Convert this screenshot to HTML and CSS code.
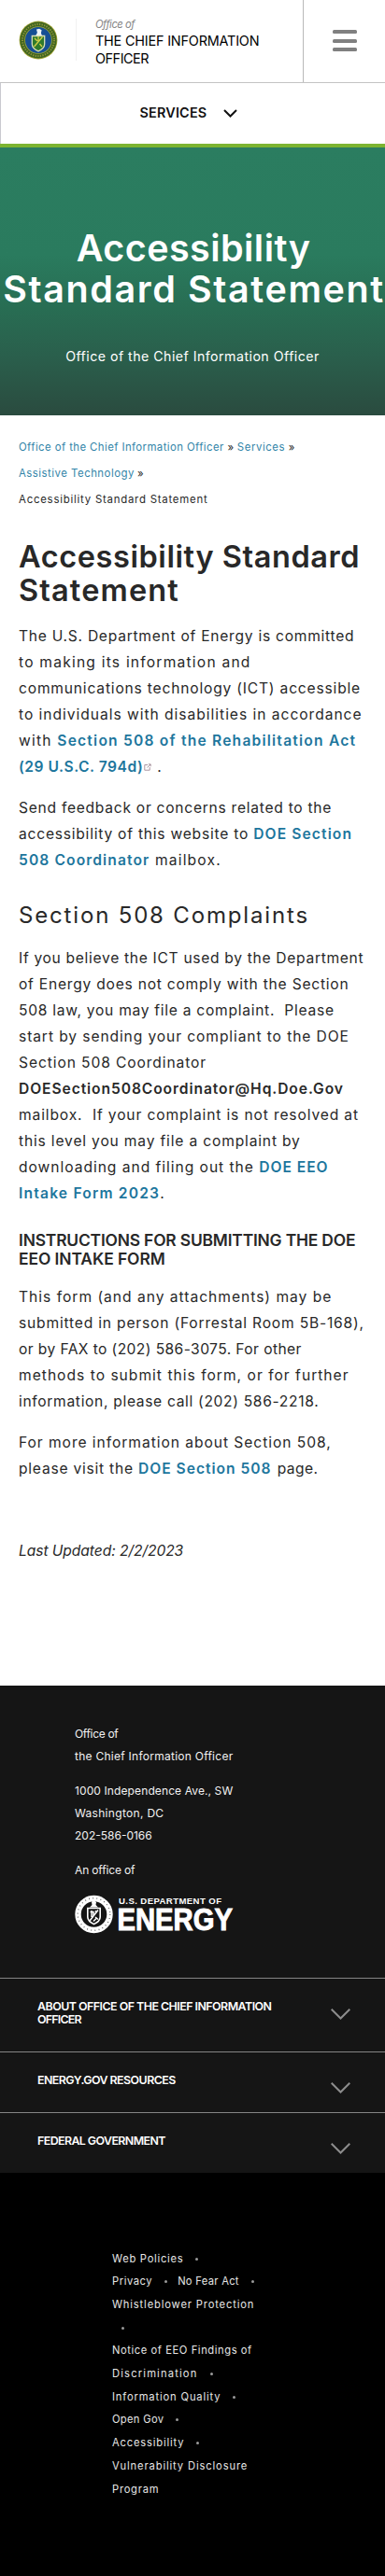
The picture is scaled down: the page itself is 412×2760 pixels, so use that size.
FILE: index.html
```html
<!DOCTYPE html>
<html lang="en">
<head>
<meta charset="utf-8">
<title>Accessibility Standard Statement | Department of Energy</title>
<link rel="stylesheet" href="styles.css">
</head>
<body>
<header class="header">
  <a class="brand">
    <svg class="seal" viewBox="0 0 42 42">
      <circle cx="21" cy="21" r="20.4" fill="#a5a636"/>
      <circle cx="21" cy="21" r="19.6" fill="#3f6420"/>
      <circle cx="21" cy="21" r="17" fill="none" stroke="#8f953a" stroke-width="2" stroke-dasharray="1.3 1.300"/>
      <circle cx="21" cy="21" r="14.800" fill="#9fa53f"/>
      <circle cx="21" cy="21" r="14" fill="#164f94"/>
      <path d="M19 9.500l3-.8 2.600 1.600-.7 3.200 1 2.400h-6.600l1.600-3z" fill="#eef3f6"/>
      <path d="M14.300 16.500h13.400v8.800c0 4-3.400 6-6.700 7.600-3.300-1.600-6.700-3.600-6.700-7.600z" fill="#2f7a2c" stroke="#d9dfb4" stroke-width="1.300"/>
      <path d="M16.500 28l9-10.500M17 19l3 3m2.500 3l2.500 3M21 17v5" stroke="#d4cf47" stroke-width="1.300" fill="none"/>
    </svg>
    <span class="brand-rule"></span>
    <span class="brand-text">
      <em class="brand-pre">Office of</em>
      <span class="ln bn1">THE CHIEF INFORMATION</span>
      <span class="ln bn2">OFFICER</span>
    </span>
  </a>
  <button class="burger" aria-label="Menu"><i></i><i></i><i></i></button>
</header>
<nav class="services">
  <span class="services-label">SERVICES</span>
  <svg class="services-chev" viewBox="0 0 15 9"><path d="M1 1l6.500 6.500L14 1" fill="none" stroke="#111" stroke-width="2"/></svg>
</nav>
<section class="hero">
  <div class="hero-title"><span class="ht1">Accessibility</span><span class="ht2">Standard Statement</span></div>
  <div class="hero-sub">Office of the Chief Information Officer</div>
</section>
<main class="main">
  <div class="crumbs">
    <span class="ln"><a class="k41">Office of the Chief Information Officer</a> <span class="raquo">»</span> <a class="k57">Services</a> <span class="raquo">»</span></span>
    <span class="ln"><a class="k49">Assistive Technology</a> »</span>
    <span class="ln k77">Accessibility Standard Statement</span>
  </div>
  <h1 class="h1"><span class="ln k58">Accessibility Standard</span><span class="ln k114">Statement</span></h1>
  <p>
    <span class="ln k74">The U.S. Department of Energy is committed</span>
    <span class="ln k121">to making its information and</span>
    <span class="ln k81">communications technology (ICT) accessible</span>
    <span class="ln k97">to individuals with disabilities in accordance</span>
    <span class="ln k121">with <a>Section 508 of the Rehabilitation Act</a></span>
    <span class="ln k53"><a>(29 U.S.C. 794d)</a><svg class="ext" viewBox="0 0 8 8"><path d="M4 1.500H.8v5.700h5.400V4M3.500 4.500L7 1M4.800.8h2.400v2.400" fill="none" stroke="#a08a96" stroke-width=".9"/></svg><span>.</span></span>
  </p>
  <p>
    <span class="ln k73">Send feedback or concerns related to the</span>
    <span class="ln k77">accessibility of this website to <a class="k111">DOE Section</a></span>
    <span class="ln k118"><a class="k111">508 Coordinator</a> mailbox.</span>
  </p>
  <h2 class="h2"><span class="ln">Section 508 Complaints</span></h2>
  <p>
    <span class="ln k69">If you believe the ICT used by the Department</span>
    <span class="ln k77">of Energy does not comply with the Section</span>
    <span class="ln k72">508 law, you may file a complaint.&nbsp; Please</span>
    <span class="ln k90">start by sending your compliant to the DOE</span>
    <span class="ln k90">Section 508 Coordinator</span>
    <span class="ln k92"><b>DOESection508Coordinator@Hq.Doe.Gov</b></span>
    <span class="ln k86">mailbox.&nbsp; If your complaint is not resolved at</span>
    <span class="ln k83">this level you may file a complaint by</span>
    <span class="ln k97">downloading and filing out the <a>DOE EEO</a></span>
    <span class="ln k119"><a>Intake Form 2023</a>.</span>
  </p>
  <h3 class="h3"><span class="ln kn17">INSTRUCTIONS FOR SUBMITTING THE DOE</span><span class="ln kn6">EEO INTAKE FORM</span></h3>
  <p>
    <span class="ln k99">This form (and any attachments) may be</span>
    <span class="ln k81">submitted in person (Forrestal Room 5B-168),</span>
    <span class="ln k41">or by FAX to (202) 586-3075. For other</span>
    <span class="ln k101">methods to submit this form, or for further</span>
    <span class="ln k67">information, please call (202) 586-2218.</span>
  </p>
  <p>
    <span class="ln k95">For more information about Section 508,</span>
    <span class="ln k77">please visit the <a class="k99">DOE Section 508</a> <span class="page-word">page.</span></span>
  </p>
  <p class="updated"><em class="kn6">Last Updated: 2/2/2023</em></p>
</main>
<footer class="footer">
  <div class="address">
    <div class="addr-group"><span class="ln fa1">Office of</span><span class="ln fa2">the Chief Information Officer</span></div>
    <div class="addr-group"><span class="ln fa3">1000 Independence Ave., SW</span><span class="ln fa4">Washington, DC</span><span class="ln">202-586-0166</span></div>
    <div class="addr-group"><span class="ln fa5">An office of</span></div>
    <svg class="logo" viewBox="0 0 172 44">
      <circle cx="20.500" cy="22" r="17" fill="none" stroke="#fff" stroke-width="6.400"/>
      <circle cx="20.500" cy="22" r="17.300" fill="none" stroke="#555" stroke-width="1.400" stroke-dasharray=".8 3.400"/>
      <path d="M18 8.500l2.800-1 2.200 1.500-.5 3 2.500 2.500h-9l2.500-2.500z" fill="#fff"/>
      <path d="M13.800 15.500h13.400v9.500c0 4-3.400 6-6.700 7.600-3.300-1.600-6.700-3.600-6.700-7.600z" fill="#151515" stroke="#fff" stroke-width="1.600"/>
      <path d="M16 29l9-11.500M16.500 19.500h3.500v4M22 25l3 2.500M18 18v7M22.500 18v3M20 29.500l3-3" stroke="#fff" stroke-width="1.500" fill="none"/>
      <text x="47" y="11.200" class="logo-top" textLength="110">U.S. DEPARTMENT OF</text>
      <text x="45.500" y="38.700" class="logo-big" textLength="123.500" lengthAdjust="spacingAndGlyphs">ENERGY</text>
    </svg>
  </div>
  <div class="acc acc-tall"><div class="acc-title"><span class="ln ac1">ABOUT OFFICE OF THE CHIEF INFORMATION</span><span class="ln ac2">OFFICER</span></div><svg class="acc-chev" viewBox="0 0 21 12"><path d="M.7.700l9.800 9.800L20.300.700" fill="none" stroke="#8c8c8c" stroke-width="2"/></svg></div>
  <div class="acc"><div class="acc-title"><span class="ln ac3">ENERGY.GOV RESOURCES</span></div><svg class="acc-chev" viewBox="0 0 21 12"><path d="M.7.700l9.800 9.800L20.300.700" fill="none" stroke="#8c8c8c" stroke-width="2"/></svg></div>
  <div class="acc"><div class="acc-title"><span class="ln ac4">FEDERAL GOVERNMENT</span></div><svg class="acc-chev" viewBox="0 0 21 12"><path d="M.7.700l9.800 9.800L20.300.700" fill="none" stroke="#8c8c8c" stroke-width="2"/></svg></div>
</footer>
<div class="policies">
  <span class="ln k72">Web Policies<i class="sep"></i></span>
  <span class="ln"><span class="k56">Privacy</span><i class="sep"></i><span class="k29">No Fear Act</span><i class="sep"></i></span>
  <span class="ln k84">Whistleblower Protection</span>
  <span class="ln sep-line"><i class="sep sep-wrap"></i></span>
  <span class="ln k57">Notice of EEO Findings of</span>
  <span class="ln k116">Discrimination<i class="sep"></i></span>
  <span class="ln k84">Information Quality<i class="sep"></i></span>
  <span class="ln k31">Open Gov<i class="sep"></i></span>
  <span class="ln k82">Accessibility<i class="sep"></i></span>
  <span class="ln k86">Vulnerability Disclosure</span>
  <span class="ln k74">Program</span>
</div>
</body>
</html>
```
FILE: styles.css
```css
*{box-sizing:border-box}
body{margin:0;width:412px;height:2760px;background:#000;color:#282828;font-family:Inter,"Liberation Sans",sans-serif;overflow:hidden}
.ln{display:block;white-space:nowrap}

/* Header */
.header{display:flex;height:89px;background:#fff;border-bottom:1px solid #c4c4c4}
.brand{display:flex;width:324px;padding-left:20px}
.seal{width:42px;height:42px;margin-top:21.500px}
.brand-rule{width:1px;height:45px;margin:20px 0 0 19px;background:#f1f1f1}
.brand-text{padding:16.600px 0 0 20px;color:#000;font-size:14.400px;line-height:19px}
.brand-pre{display:block;height:17px;font-size:11.200px;line-height:18px;color:#858585;letter-spacing:-.45px;white-space:nowrap}
.bn1{letter-spacing:-.18px}
.bn2{letter-spacing:-.45px}
.burger{display:flex;flex-direction:column;gap:5.500px;flex:1;padding:32px 0 0 31px;border:0;border-left:1px solid #b9b9b9;background:none}
.burger i{width:26px;height:4px;border-radius:1.500px;background:#808080}

.services{display:flex;height:65px;padding-left:148.500px;background:#fff;border-left:1px solid #c9c9d0}
.services-label{padding-top:20px;font-size:14.400px;line-height:24px;font-weight:600;letter-spacing:.19px;color:#111}
.services-chev{width:15px;height:9px;margin:28px 0 0 17.500px}

/* Hero */
.hero{height:291px;border-top:4px solid #7db431;padding-top:85.500px;background:linear-gradient(#2b7d60 0,#2a7b5e 40%,#286d53 60%,#2a5f4c 78%,#2a4b3f 100%);color:#fff}
.hero-title{display:flex;flex-direction:column;align-items:center;font-size:39.500px;line-height:44px;font-weight:600;white-space:nowrap}
.ht1{letter-spacing:.44px;margin-left:2px}
.ht2{letter-spacing:1.600px;margin-left:3px}
.hero-sub{margin-top:40.500px;text-align:center;font-size:14.200px;line-height:20px;letter-spacing:.46px}

/* Article */
.main{height:1361px;padding:20px 0 0 20px;background:#fff;font-size:15.600px;line-height:28px}
.main a{color:#1d769d;font-weight:600}
.main b{font-weight:600}
p{margin:0 0 16px}
.crumbs{margin-bottom:29.500px;font-size:11.400px}
.crumbs .crumbs a,.crumbs a{color:#3284a8;font-weight:400}
.raquo{margin:0 .5px}
.h1{margin:0 0 17px;font-size:32.500px;line-height:36px;font-weight:600}
.h2{margin:31px 0 18px;font-size:24px;line-height:28px;font-weight:400;letter-spacing:1.830px}
.h3{margin:26px 0 17.500px;font-size:17.400px;line-height:20px;font-weight:600}
.ext{width:8px;height:8px;margin:0 6px 1px 1px}
.page-word{letter-spacing:.4px;margin-left:1px}
.updated{margin-top:59.500px}

/* Letter-spacing steps, in hundredths of a pixel */
.k29{letter-spacing:.29px}.k31{letter-spacing:.31px}.k41{letter-spacing:.41px}.k49{letter-spacing:.49px}
.k53{letter-spacing:.53px}.k56{letter-spacing:.56px}.k57{letter-spacing:.57px}.k58{letter-spacing:.58px}
.k67{letter-spacing:.67px}.k69{letter-spacing:.69px}.k72{letter-spacing:.72px}.k73{letter-spacing:.73px}
.k74{letter-spacing:.74px}.k77{letter-spacing:.77px}.k81{letter-spacing:.81px}.k82{letter-spacing:.82px}
.k83{letter-spacing:.83px}.k84{letter-spacing:.84px}.k86{letter-spacing:.86px}.k90{letter-spacing:.9px}
.k92{letter-spacing:.92px}.k95{letter-spacing:.95px}.k97{letter-spacing:.97px}.k99{letter-spacing:.99px}
.k101{letter-spacing:1.010px}.k111{letter-spacing:1.110px}.k114{letter-spacing:1.140px}.k116{letter-spacing:1.160px}
.k118{letter-spacing:1.180px}.k119{letter-spacing:1.190px}.k121{letter-spacing:1.210px}
.kn6{letter-spacing:-.06px}.kn17{letter-spacing:-.17px}

/* Footer */
.footer{background:#151515;color:#f2f2f2}
.address{height:313px;padding:40px 0 0 80px;font-size:12px;line-height:24px}
.addr-group{margin-bottom:13px}
.fa1{letter-spacing:-.33px}.fa2{letter-spacing:.26px}.fa3{letter-spacing:.11px}.fa4{letter-spacing:.31px}.fa5{letter-spacing:-.15px}
.logo{display:block;width:172px;height:44px}
.logo-top{font:bold 9.600px "Liberation Sans",sans-serif;fill:#fff}
.logo-big{font:bold 33px "Liberation Sans",sans-serif;fill:#fff;stroke:#fff;stroke-width:1}
.acc{display:flex;justify-content:space-between;height:65px;border-top:1px solid #858585;padding:22.500px 37px 0 40px}
.acc-tall{height:79px}
.acc-title{font-size:12.400px;line-height:14px;font-weight:600;color:#fff}
.acc-chev{width:21px;height:12px;margin-top:9px}
.ac1{letter-spacing:-.52px}.ac2{letter-spacing:-.76px}.ac3{letter-spacing:-.54px}.ac4{letter-spacing:-.58px}

.policies{padding:79.500px 0 0 120px;font-size:11.200px;line-height:24.700px;color:#e6e6e6}
.sep{display:inline-block;width:3px;height:3px;margin:0 11px 2px 13px;border-radius:50%;background:#9a9a9a}
.sep-wrap{margin-left:10px}
.sep-line{height:24.700px}
```
